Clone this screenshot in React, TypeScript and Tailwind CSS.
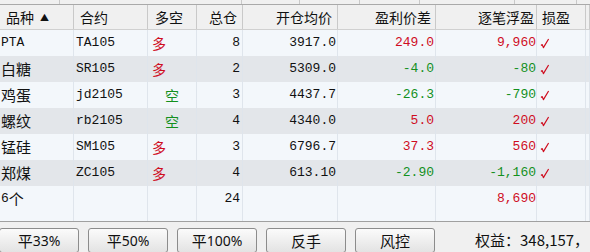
import React from "react";

const RED = "text-[#cf0d1f]";
const GREEN = "text-[#13901e]";
const MONO = "font-['Liberation_Mono','DejaVu_Sans_Mono',monospace] text-[13px]";
const CJK = "font-['Noto_Sans_CJK_SC','Noto_Sans',sans-serif] text-[14px]";

type Row = {
  name: string;
  code: string;
  dir: "多" | "空";
  qty: string;
  price: string;
  diff: string;
  pnl: string;
  up: boolean;
};

const rows: Row[] = [
  { name: "PTA", code: "TA105", dir: "多", qty: "8", price: "3917.0", diff: "249.0", pnl: "9,960", up: true },
  { name: "白糖", code: "SR105", dir: "多", qty: "2", price: "5309.0", diff: "-4.0", pnl: "-80", up: false },
  { name: "鸡蛋", code: "jd2105", dir: "空", qty: "3", price: "4437.7", diff: "-26.3", pnl: "-790", up: false },
  { name: "螺纹", code: "rb2105", dir: "空", qty: "4", price: "4340.0", diff: "5.0", pnl: "200", up: true },
  { name: "锰硅", code: "SM105", dir: "多", qty: "3", price: "6796.7", diff: "37.3", pnl: "560", up: true },
  { name: "郑煤", code: "ZC105", dir: "多", qty: "4", price: "613.10", diff: "-2.90", pnl: "-1,160", up: false },
];

const COLS = "grid grid-cols-[74px_74px_49px_46px_95px_98px_101px_49px_4px]";

function Check() {
  return (
    <svg width="10" height="11" viewBox="0 0 10 11" className="block">
      <path d="M1 7.5 L2.2 6.6 L3.4 9.6 L8.6 1" fill="none" stroke="#cf0d1f" strokeWidth="1.2" strokeLinejoin="round" />
    </svg>
  );
}

function HeadCell({ children, align = "left", cls = "" }: { children?: React.ReactNode; align?: "left" | "right"; cls?: string }) {
  return (
    <div
      className={`flex items-center h-full border-r border-[#c9c9c9] ${CJK} text-[#111] ${
        align === "right" ? "justify-end" : "justify-start"
      } ${cls}`}
    >
      {children}
    </div>
  );
}

function Cell({ children, align = "left", cls = "" }: { children?: React.ReactNode; align?: "left" | "right"; cls?: string }) {
  return (
    <div
      className={`flex items-center h-full border-r border-[#dfe5ec] whitespace-nowrap ${
        align === "right" ? "justify-end" : "justify-start"
      } ${cls}`}
    >
      {children}
    </div>
  );
}

function Btn({ label, pct }: { label: string; pct?: string }) {
  return (
    <div className="w-[80px] h-[25px] shrink-0 rounded-[3px] border border-[#8c8c8c] bg-gradient-to-b from-[#fbfbfb] to-[#e3e3e3] flex items-center justify-center text-[#111]">
      <span className="font-['Noto_Sans_CJK_SC',sans-serif] text-[15px] leading-none">{label}</span>
      {pct && <span className="font-['Noto_Sans','Open_Sans',sans-serif] text-[14px] leading-none">{pct}</span>}
    </div>
  );
}

export default function App() {
  return (
    <div className="w-[590px] h-[252px] overflow-hidden bg-[#f3f7fb] flex flex-col">
      {/* top strip from panel above */}
      <div className="h-[5px] flex bg-[#f0f0f0] border-b border-[#a9a9a9] shrink-0">
        <div className="w-[60px] border-r border-[#c9c9c9]" />
        <div className="w-[182px] border-r border-[#c9c9c9]" />
        <div className="w-[58px] border-r border-[#c9c9c9]" />
        <div className="w-[60px] border-r border-[#c9c9c9]" />
        <div className="w-[60px] border-r border-[#c9c9c9]" />
        <div className="w-[95px] border-r border-[#c9c9c9]" />
        <div className="w-[62px] border-r border-[#c9c9c9]" />
      </div>

      {/* header */}
      <div className={`${COLS} h-[25px] bg-[#f0f0f0] border-b border-[#d0d0d0] shrink-0`}>
        <HeadCell cls="pl-[6px] gap-[6px]">
          <span>品种</span>
          <span className="text-[9px] leading-none">▲</span>
        </HeadCell>
        <HeadCell cls="pl-[6px]">合约</HeadCell>
        <HeadCell cls="pl-[7px]">多空</HeadCell>
        <HeadCell align="right" cls="pr-[5px]">总仓</HeadCell>
        <HeadCell align="right" cls="pr-[5px]">开仓均价</HeadCell>
        <HeadCell align="right" cls="pr-[4px]">盈利价差</HeadCell>
        <HeadCell align="right" cls="pr-[2px]">逐笔浮盈</HeadCell>
        <HeadCell cls="pl-[5px]">损盈</HeadCell>
        <HeadCell />
      </div>

      {/* rows */}
      {rows.map((r, i) => (
        <div
          key={r.code}
          className={`${COLS} h-[26px] shrink-0 ${i % 2 === 0 ? "bg-[#f3f7fb]" : "bg-[#e3e6ea]"} text-[#111]`}
        >
          <Cell cls={/^[A-Z]/.test(r.name) ? `${MONO} pl-[1px]` : `${CJK} text-[15px] pl-[1px]`}>{r.name}</Cell>
          <Cell cls={`${MONO} pl-[2px]`}>{r.code}</Cell>
          <Cell cls={`${CJK} ${r.dir === "多" ? `${RED} pl-[4px]` : `${GREEN} pl-[17px]`}`}>{r.dir}</Cell>
          <Cell align="right" cls={`${MONO} pr-[2px]`}>{r.qty}</Cell>
          <Cell align="right" cls={`${MONO} pr-[1px]`}>{r.price}</Cell>
          <Cell align="right" cls={`${MONO} pr-[1px] ${r.up ? RED : GREEN}`}>{r.diff}</Cell>
          <Cell align="right" cls={`${MONO} pr-[0px] ${r.up ? RED : GREEN}`}>{r.pnl}</Cell>
          <Cell cls="pl-[3px]">
            <Check />
          </Cell>
          <Cell />
        </div>
      ))}

      {/* total row */}
      <div className={`${COLS} h-[26px] shrink-0 bg-[#f3f7fb] text-[#111]`}>
        <Cell cls="pl-[1px]">
          <span className={MONO}>6</span>
          <span className={CJK + " text-[15px]"}>个</span>
        </Cell>
        <Cell />
        <Cell />
        <Cell align="right" cls={`${MONO} pr-[2px]`}>24</Cell>
        <Cell />
        <Cell />
        <Cell align="right" cls={`${MONO} ${RED}`}>8,690</Cell>
        <Cell />
        <Cell />
      </div>
      <div className={`${COLS} h-[9px] shrink-0 bg-[#f3f7fb]`}>
        <Cell />
        <Cell />
        <Cell />
        <Cell />
        <Cell />
        <Cell />
        <Cell />
        <Cell />
        <Cell />
      </div>

      {/* bottom bar */}
      <div className="flex-1 border-t border-[#a0a0a0] bg-[#f0f0f0] flex items-start pt-[6px] gap-[9px]">
        <div className="flex gap-[9px] -ml-[1px]">
          <Btn label="平" pct="33%" />
          <Btn label="平" pct="50%" />
          <Btn label="平" pct="100%" />
          <Btn label="反手" />
          <Btn label="风控" />
        </div>
        <div className="ml-[31px] h-[25px] flex items-center whitespace-nowrap font-['Noto_Sans_CJK_SC',sans-serif] text-[15px] text-[#111]">
          权益：348,157，
        </div>
      </div>
    </div>
  );
}
